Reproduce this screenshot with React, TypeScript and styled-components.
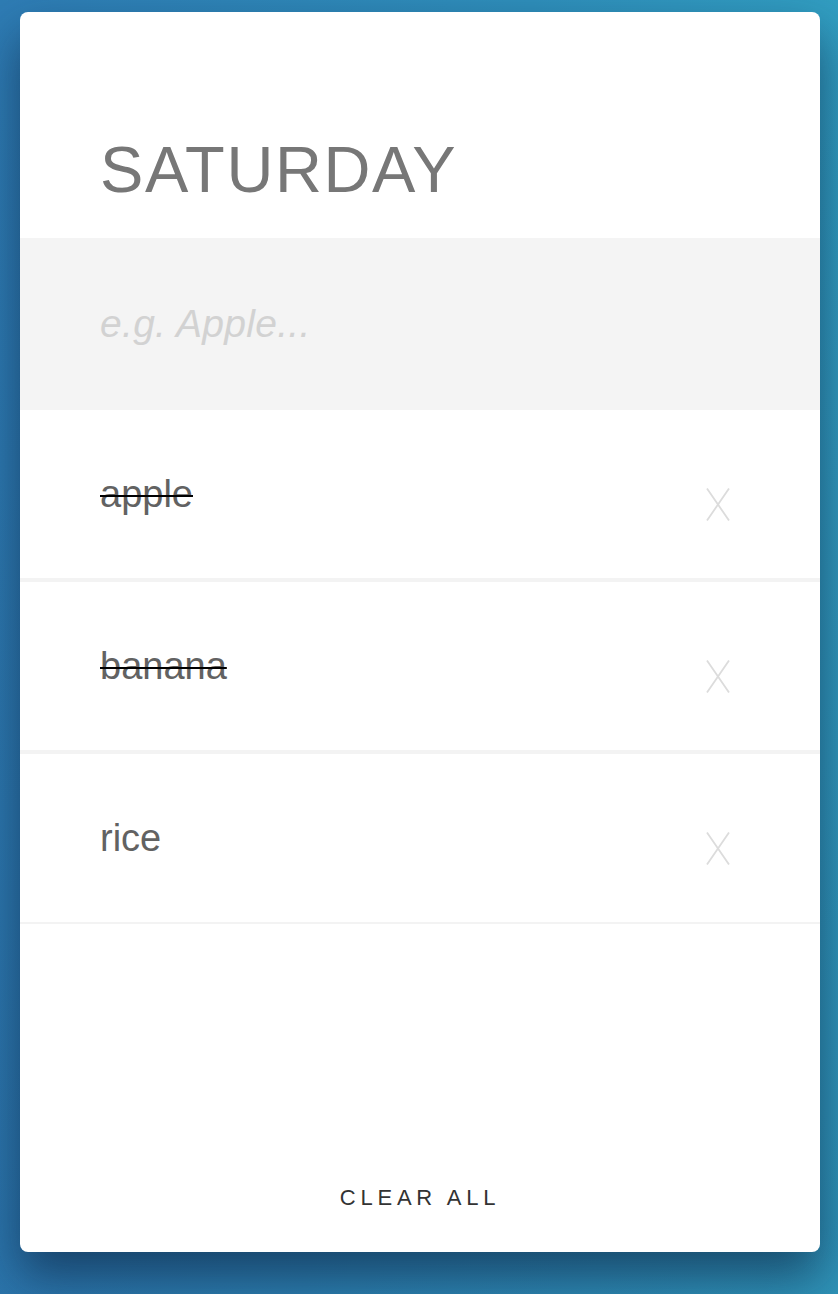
import React from "react";
import styled, { createGlobalStyle } from "styled-components";

const Global = createGlobalStyle`
  html, body { margin: 0; padding: 0; }
  body {
    min-height: 1294px;
    font-family: "Liberation Sans", Arial, Helvetica, sans-serif;
    background:
      linear-gradient(to bottom, rgba(30, 50, 120, 0) 0%, rgba(30, 50, 120, 0.18) 100%),
      linear-gradient(100deg, #2e7cb4 0%, #2f8fbb 50%, #33a9c6 100%);
    background-color: #2c7fb0;
  }
  #root { padding: 12px 18px 0 20px; }
`;

const Card = styled.div`
  width: 800px;
  height: 1240px;
  background: #fff;
  border-radius: 8px;
  display: flex;
  flex-direction: column;
  overflow: hidden;
  box-shadow: 0 24px 48px rgba(10, 30, 60, 0.6);
`;

const Header = styled.header`
  padding: 125px 80px 36px;
`;

const Title = styled.h1`
  margin: 0;
  font-size: 65px;
  line-height: 65px;
  font-weight: 400;
  letter-spacing: 1.6px;
  color: #777;
`;

const Input = styled.input`
  display: block;
  box-sizing: border-box;
  width: 100%;
  height: 172px;
  border: none;
  outline: none;
  background: #f4f4f4;
  padding: 0 80px;
  font-family: "Liberation Sans", Arial, sans-serif;
  font-size: 39px;
  font-style: italic;
  letter-spacing: 0.3px;
  color: #555;
  &::placeholder { color: #d2d2d2; }
`;

const List = styled.ul`
  list-style: none;
  margin: 0;
  padding: 0;
`;

const Item = styled.li<{ $last?: boolean }>`
  display: flex;
  align-items: center;
  justify-content: space-between;
  height: 168px;
  padding: 0 90px 0 80px;
  border-bottom: ${(p) => (p.$last ? "2px" : "4px")} solid #f3f3f3;
`;

const Label = styled.span<{ $done?: boolean }>`
  font-size: 38px;
  color: #626262;
  text-decoration: ${(p) => (p.$done ? "line-through" : "none")};
  text-decoration-color: #000;
  text-decoration-thickness: 2px;
`;

const Remove = styled.button`
  border: none;
  background: none;
  padding: 0;
  margin-top: 20px;
  width: 24px;
  height: 33px;
  cursor: pointer;
  display: flex;
`;

const Footer = styled.footer`
  margin-top: auto;
  display: flex;
  justify-content: center;
  padding-bottom: 43px;
`;

const ClearButton = styled.button`
  border: none;
  background: none;
  padding: 0;
  font-family: "Liberation Sans", Arial, sans-serif;
  font-size: 22px;
  line-height: 22px;
  letter-spacing: 4.8px;
  color: #333;
  cursor: pointer;
`;

const XIcon = () => (
  <svg width="24" height="33" viewBox="0 0 24 33" fill="none">
    <path d="M1 0.5 L23 32.5 M23 0.5 L1 32.5" stroke="#dcdcdc" strokeWidth="1.8" />
  </svg>
);

const items = [
  { name: "apple", done: true },
  { name: "banana", done: true },
  { name: "rice", done: false },
];

export default function App() {
  return (
    <>
      <Global />
      <Card>
        <Header>
          <Title>SATURDAY</Title>
        </Header>
        <Input placeholder="e.g. Apple..." />
        <List>
          {items.map((it, i) => (
            <Item key={it.name} $last={i === items.length - 1}>
              <Label $done={it.done}>{it.name}</Label>
              <Remove aria-label="remove">
                <XIcon />
              </Remove>
            </Item>
          ))}
        </List>
        <Footer>
          <ClearButton>CLEAR ALL</ClearButton>
        </Footer>
      </Card>
    </>
  );
}
